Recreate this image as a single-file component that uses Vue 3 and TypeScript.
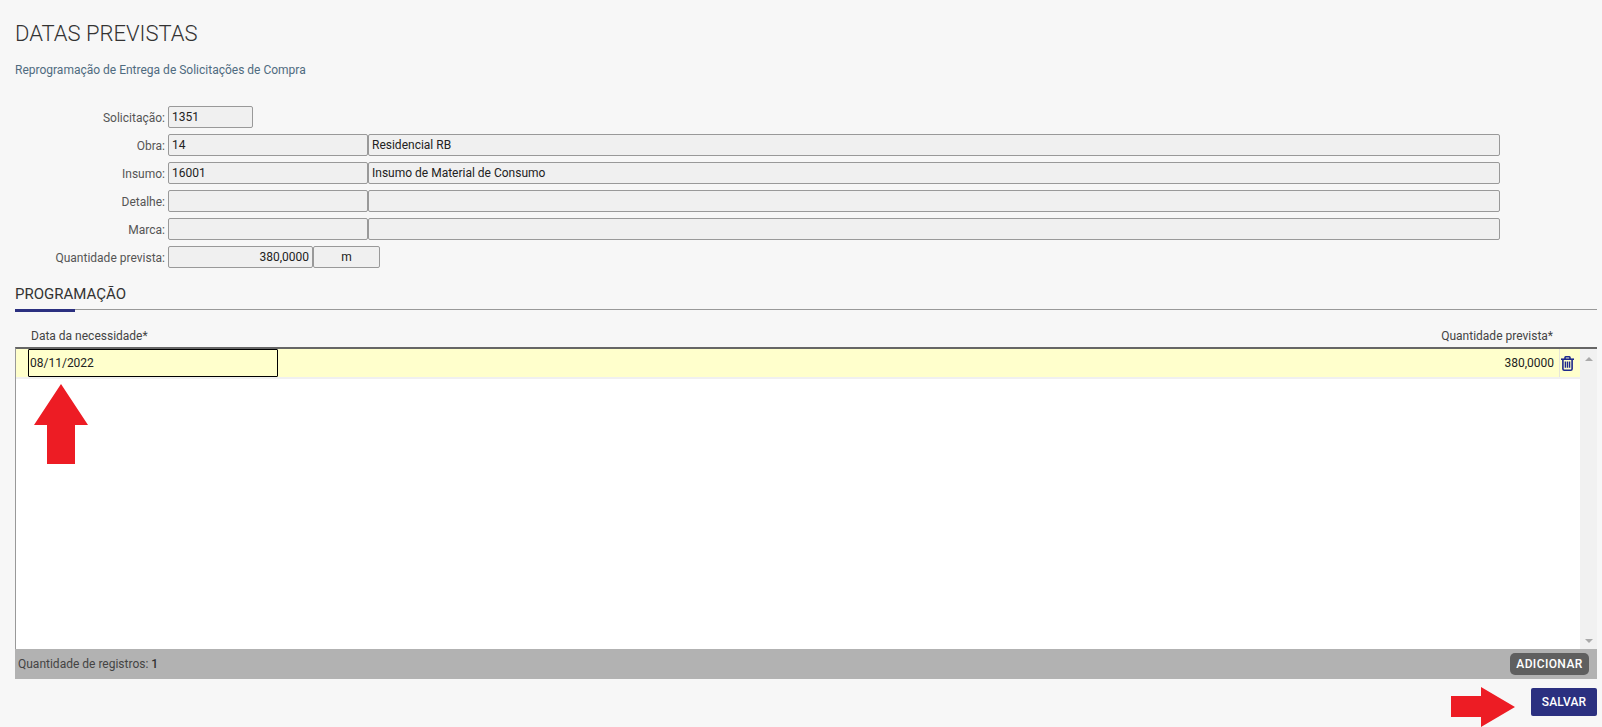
<script setup lang="ts">
interface Field {
  label: string
  code: string
  desc: string
}
const fields: Field[] = [
  { label: 'Obra:', code: '14', desc: 'Residencial RB' },
  { label: 'Insumo:', code: '16001', desc: 'Insumo de Material de Consumo' },
  { label: 'Detalhe:', code: '', desc: '' },
  { label: 'Marca:', code: '', desc: '' }
]
</script>

<template>
  <main class="page">
    <h1 class="title">DATAS PREVISTAS</h1>
    <p class="subtitle">Reprogramação de Entrega de Solicitações de Compra</p>

    <section class="form">
      <div class="row">
        <label class="lbl">Solicitação:</label>
        <div class="box solic">1351</div>
      </div>
      <div v-for="f in fields" :key="f.label" class="row">
        <label class="lbl">{{ f.label }}</label>
        <div class="box code">{{ f.code }}</div>
        <div class="box desc">{{ f.desc }}</div>
      </div>
      <div class="row">
        <label class="lbl">Quantidade prevista:</label>
        <div class="box qty">380,0000</div>
        <div class="box unit">m</div>
      </div>
    </section>

    <h2 class="section"><span class="section-text">PROGRAMAÇÃO</span></h2>

    <div class="grid-head">
      <span>Data da necessidade*</span>
      <span>Quantidade prevista*</span>
    </div>
    <section class="grid">
      <div class="grid-main">
        <div class="grid-row">
          <div class="date-input">08/11/2022</div>
          <div class="row-qty">380,0000</div>
          <div class="row-action">
            <svg width="13" height="15" viewBox="0 0 13 15" fill="none" stroke="#1f2a8c" stroke-width="1.6">
              <path d="M0 3.2H13" />
              <path d="M4 3V1.6A1 1 0 0 1 5 .8h3a1 1 0 0 1 1 .8V3" />
              <path d="M1.9 3.2V13a1.3 1.3 0 0 0 1.3 1.2h6.6a1.3 1.3 0 0 0 1.3-1.2V3.2" />
              <path d="M4.4 5.6v6.2M6.5 5.6v6.2M8.6 5.6v6.2" stroke-width="1.4" />
            </svg>
          </div>
        </div>
      </div>
      <div class="scrollbar">
        <span class="tri up"></span>
        <span class="tri down"></span>
      </div>
    </section>
    <footer class="grid-foot">
      <span class="count">Quantidade de registros: <b>1</b></span>
      <button class="btn-add" type="button">ADICIONAR</button>
    </footer>

    <div class="actions">
      <button class="btn-save" type="button">SALVAR</button>
    </div>

    <svg class="arrow arrow-up" width="54" height="80" viewBox="0 0 54 80">
      <path d="M27 0L54 41H41V80H13V41H0Z" fill="#ed1c24" />
    </svg>
    <svg class="arrow arrow-right" width="66" height="40" viewBox="0 0 66 40">
      <path d="M64 20L30 0V9H0V30H30V40Z" fill="#ed1c24" />
    </svg>
  </main>
</template>

<style scoped>
.page {
  position: relative;
  box-sizing: border-box;
  height: 727px;
  padding: 0 5px 0 15px;
  overflow: hidden;
  font-family: Roboto, "Liberation Sans", sans-serif;
  font-size: 12px;
  color: #333;
}
.title {
  margin: 0;
  padding-top: 21px;
  height: 46px;
  line-height: 26px;
  box-sizing: border-box;
  font-size: 22px;
  font-weight: 300;
  color: #333;
}
.subtitle {
  margin: 16px 0 0 0;
  line-height: 16px;
  height: 16px;
  font-size: 12px;
  color: #4f6b80;
}
.form {
  margin-top: 28px;
  display: flex;
  flex-direction: column;
  gap: 6px;
}
.row {
  display: flex;
  height: 22px;
  align-items: stretch;
}
.lbl {
  width: 150px;
  text-align: right;
  margin-right: 3px;
  line-height: 24px;
  color: #555;
}
.box {
  box-sizing: border-box;
  height: 22px;
  line-height: 20px;
  padding: 0 3px;
  border: 1px solid #999;
  border-radius: 2px;
  background: #f0f0f0;
  color: #222;
}
.solic { width: 85px; }
.code { width: 200px; }
.desc { width: 1132px; }
.qty { width: 145px; text-align: right; }
.unit { width: 67px; text-align: center; }
.section {
  margin: 16px 0 0 0;
  height: 26px;
  box-sizing: border-box;
  border-bottom: 1px solid #999;
  font-size: 15px;
  font-weight: 400;
  line-height: 20px;
  color: #333;
}
.section-text {
  display: inline-block;
  position: relative;
  height: 26px;
}
.section-text::after {
  content: "";
  position: absolute;
  left: 0;
  top: 25px;
  width: 60px;
  height: 3px;
  background: #2b3080;
}
.grid-head {
  display: flex;
  justify-content: space-between;
  height: 37px;
  box-sizing: border-box;
  padding: 18px 44px 0 16px;
  line-height: 16px;
  color: #444;
}
.grid {
  display: flex;
  box-sizing: border-box;
  height: 302px;
  border-top: 2px solid #666;
  border-left: 1px solid #999;
  background: #fff;
}
.grid-main {
  flex: 1;
  min-width: 0;
}
.grid-row {
  display: flex;
  align-items: stretch;
  box-sizing: border-box;
  height: 30px;
  padding-left: 12px;
  background: #ffffcc;
  border-bottom: 2px solid #f0f0f0;
}
.date-input {
  box-sizing: border-box;
  width: 250px;
  height: 28px;
  border: 1px solid #000;
  border-radius: 1px;
  padding-left: 1px;
  line-height: 26px;
  color: #222;
}
.row-qty {
  flex: 1;
  text-align: right;
  padding-right: 5px;
  line-height: 28px;
  color: #222;
}
.row-action {
  box-sizing: border-box;
  width: 21px;
  border-left: 1px solid #e6e6d8;
  display: flex;
  align-items: center;
  padding-left: 1px;
}
.scrollbar {
  position: relative;
  width: 17px;
  background: #f1f1f1;
}
.tri {
  position: absolute;
  left: 5px;
  width: 0;
  height: 0;
  border-left: 4px solid transparent;
  border-right: 4px solid transparent;
}
.tri.up {
  top: 8px;
  border-bottom: 4px solid #aaa;
}
.tri.down {
  bottom: 6px;
  border-top: 4px solid #aaa;
}
.grid-foot {
  display: flex;
  align-items: center;
  justify-content: space-between;
  height: 30px;
  padding: 0 8px 0 3px;
  background: #b2b2b2;
  color: #444;
}
.count b {
  font-weight: 500;
  color: #333;
}
.btn-add {
  box-sizing: border-box;
  width: 79px;
  height: 22px;
  padding: 0;
  border: 0;
  border-radius: 5px;
  background: #5f5f5f;
  color: #fff;
  font-family: inherit;
  font-size: 12px;
  font-weight: 500;
  letter-spacing: 0.4px;
}
.actions {
  display: flex;
  justify-content: flex-end;
  padding-top: 9px;
}
.btn-save {
  box-sizing: border-box;
  width: 66px;
  height: 28px;
  padding: 0;
  border: 0;
  border-radius: 2px;
  background: #2b3080;
  color: #fff;
  font-family: inherit;
  font-size: 12px;
  font-weight: 500;
  letter-spacing: 0.2px;
}
.arrow {
  position: absolute;
}
.arrow-up {
  left: 34px;
  top: 384px;
}
.arrow-right {
  left: 1451px;
  top: 687px;
}
</style>

<style>
html, body {
  margin: 0;
  background: #f7f7f7;
}
</style>
